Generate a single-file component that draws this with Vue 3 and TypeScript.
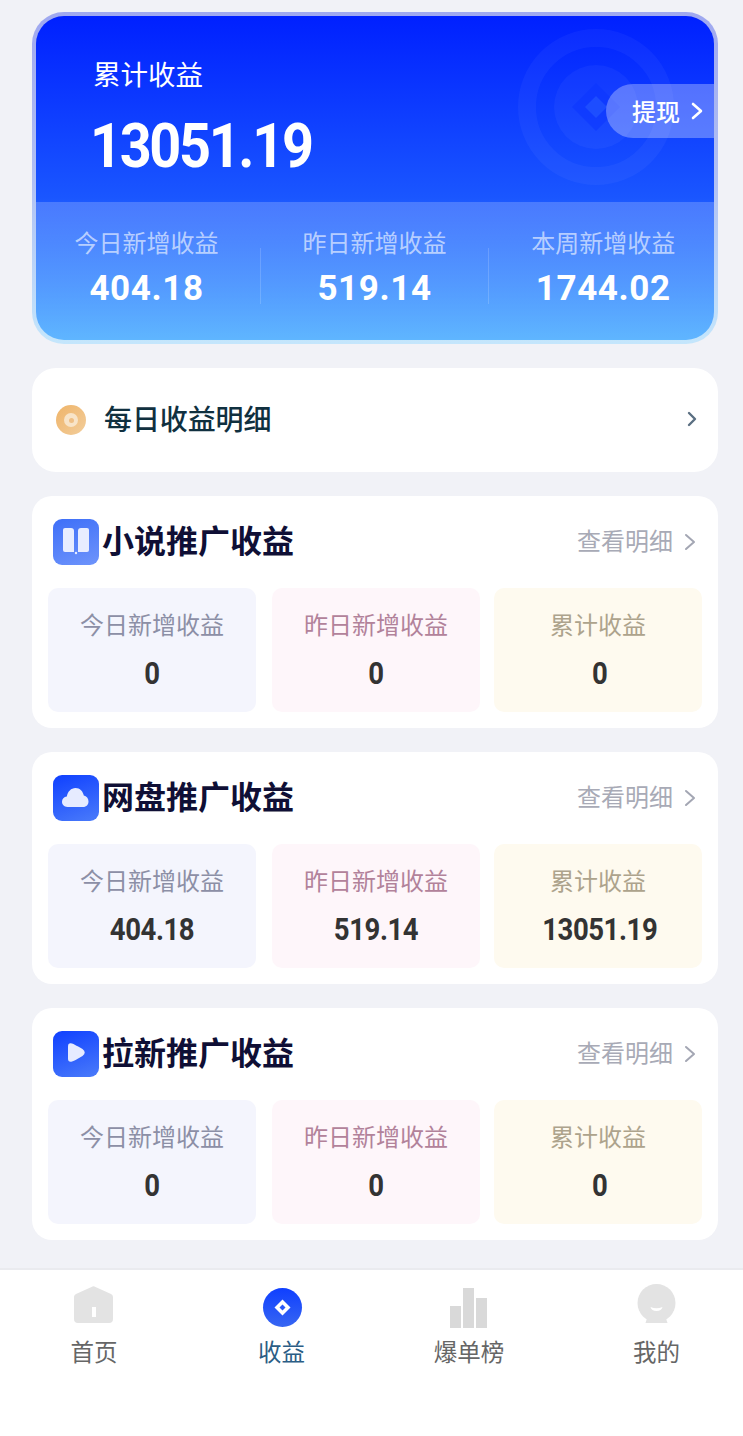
<script setup lang="ts">
interface Section {
  title: string;
  icon: 'book' | 'cloud' | 'play';
  today: string;
  yesterday: string;
  total: string;
}

const heroStats = [
  { label: '今日新增收益', value: '404.18' },
  { label: '昨日新增收益', value: '519.14' },
  { label: '本周新增收益', value: '1744.02' },
];

const sections: Section[] = [
  { title: '小说推广收益', icon: 'book', today: '0', yesterday: '0', total: '0' },
  { title: '网盘推广收益', icon: 'cloud', today: '404.18', yesterday: '519.14', total: '13051.19' },
  { title: '拉新推广收益', icon: 'play', today: '0', yesterday: '0', total: '0' },
];

const tabs = [
  { key: 'home', label: '首页' },
  { key: 'income', label: '收益' },
  { key: 'rank', label: '爆单榜' },
  { key: 'mine', label: '我的' },
];
</script>

<template>
  <div class="page">
    <section class="hero">
      <div class="hero-top">
        <svg class="coin" viewBox="0 0 160 160" aria-hidden="true">
          <circle cx="80" cy="80" r="69" fill="none" stroke="#fff" stroke-opacity="0.04" stroke-width="18" />
          <circle cx="80" cy="80" r="42" fill="#fff" fill-opacity="0.04" />
          <path d="M80 56 L104 80 L80 104 L56 80 Z" fill="#0a34ff" fill-opacity="0.5" />
          <path d="M80 69 L91 80 L80 91 L69 80 Z" fill="#2456ff" fill-opacity="0.7" />
        </svg>
        <div class="hero-label">累计收益</div>
        <div class="hero-value">13051.19</div>
        <div class="withdraw">
          <span>提现</span>
          <svg width="12" height="18" viewBox="0 0 12 18" aria-hidden="true">
            <path d="M2 2 L10 9 L2 16" fill="none" stroke="#fff" stroke-width="2.6" stroke-linecap="round" stroke-linejoin="round" />
          </svg>
        </div>
      </div>
      <div class="hero-bottom">
        <div v-for="s in heroStats" :key="s.label" class="hero-stat">
          <div class="hero-stat-label">{{ s.label }}</div>
          <div class="hero-stat-value">{{ s.value }}</div>
        </div>
      </div>
    </section>

    <section class="daily">
      <div class="disc"><i></i></div>
      <div class="daily-title">每日收益明细</div>
      <svg class="daily-arrow" width="10" height="16" viewBox="0 0 10 16" aria-hidden="true">
        <path d="M2 2 L8 8 L2 14" fill="none" stroke="#5b6f82" stroke-width="2.4" stroke-linecap="round" stroke-linejoin="round" />
      </svg>
    </section>

    <section v-for="sec in sections" :key="sec.title" class="card">
      <header class="card-head">
        <div class="app-icon" :class="sec.icon">
          <svg v-if="sec.icon === 'book'" width="46" height="46" viewBox="0 0 46 46" aria-hidden="true">
            <path d="M10 11 Q10 9 12 9 H18 Q21 9 21 12 V33 H12 Q10 33 10 31 Z" fill="#e8edff" />
            <path d="M36 11 Q36 9 34 9 H28 Q25 9 25 12 V33 H34 Q36 33 36 31 Z" fill="#e8edff" />
            <circle cx="23" cy="34" r="1.2" fill="#e8edff" />
          </svg>
          <svg v-else-if="sec.icon === 'cloud'" width="46" height="46" viewBox="0 0 46 46" aria-hidden="true">
            <path d="M14.500 32 C11 32 9 29.500 9 26.800 C9 24 11 21.800 13.800 21.500 C14.800 16.500 18 13 22.500 13 C27 13 30 16.500 30.800 20.500 C33.500 21 35.500 23.500 35.500 26.500 C35.500 29.500 33.500 32 30 32 Z" fill="#e6ebff" />
          </svg>
          <svg v-else width="46" height="46" viewBox="0 0 46 46" aria-hidden="true">
            <path d="M15 15.500 Q15 11.500 19 12.500 Q21 13 29.500 18 Q34 21.500 29.500 25 Q21 30 19 30.500 Q15 31.500 15 27.500 Z" fill="#e6ebff" />
          </svg>
        </div>
        <h2 class="card-title">{{ sec.title }}</h2>
        <div class="card-more">
          <span>查看明细</span>
          <svg width="12" height="18" viewBox="0 0 12 18" aria-hidden="true">
            <path d="M2 2 L10 9 L2 16" fill="none" stroke="#a3a6b3" stroke-width="2" stroke-linecap="round" stroke-linejoin="round" />
          </svg>
        </div>
      </header>
      <div class="tiles">
        <div class="tile tile-blue">
          <div class="tile-label">今日新增收益</div>
          <div class="tile-value">{{ sec.today }}</div>
        </div>
        <div class="tile tile-pink">
          <div class="tile-label">昨日新增收益</div>
          <div class="tile-value">{{ sec.yesterday }}</div>
        </div>
        <div class="tile tile-cream">
          <div class="tile-label">累计收益</div>
          <div class="tile-value">{{ sec.total }}</div>
        </div>
      </div>
    </section>

    <nav class="tabbar">
      <div v-for="t in tabs" :key="t.key" class="tab" :class="{ active: t.key === 'income' }">
        <svg width="44" height="44" viewBox="0 0 44 44" aria-hidden="true">
          <template v-if="t.key === 'home'">
            <path d="M2 13 Q2 11 4 10 L19.500 3 Q21.500 1.500 23.500 3 L39 10 Q41 11 41 13 V35 Q41 39 37 39 H6 Q2 39 2 35 Z" fill="#e3e3e3" />
            <rect x="20" y="23" width="4" height="10" fill="#fff" />
          </template>
          <template v-else-if="t.key === 'income'">
            <defs>
              <linearGradient id="incomeFill" x1="0" y1="0" x2="0" y2="1">
                <stop offset="0" stop-color="#0f3fff" />
                <stop offset="1" stop-color="#3766f2" />
              </linearGradient>
            </defs>
            <circle cx="22.500" cy="23.500" r="19.500" fill="url(#incomeFill)" />
            <path d="M22.500 15.500 L30.500 23.500 L22.500 31.500 L14.500 23.500 Z" fill="#fff" />
            <path d="M22.500 20.500 L25.500 23.500 L22.500 26.500 L19.500 23.500 Z" fill="#2a58f8" />
          </template>
          <template v-else-if="t.key === 'rank'">
            <rect x="3" y="22" width="11" height="22" fill="#d9d9d9" />
            <rect x="16" y="4" width="11" height="40" fill="#d9d9d9" />
            <rect x="29" y="14" width="11" height="30" fill="#d9d9d9" />
          </template>
          <template v-else>
            <circle cx="21.500" cy="19" r="19" fill="#e3e3e3" />
            <path d="M10.500 39 Q11 35 14 32 H29 Q32 35 32.500 39 Z" fill="#e3e3e3" />
            <path d="M15.500 23 Q21.500 25.500 27.500 23 Q26.500 27 21.500 27 Q16.500 27 15.500 23 Z" fill="#fff" />
          </template>
        </svg>
        <span class="tab-label">{{ t.label }}</span>
      </div>
    </nav>
  </div>
</template>

<style>
body {
  background: #f1f2f7;
}
</style>

<style scoped>
.page {
  width: 743px;
  height: 1436px;
  box-sizing: border-box;
  padding: 12px 25px 0 32px;
  background: #f1f2f7;
  font-family: "Noto Sans CJK SC", "Noto Sans", sans-serif;
  display: flex;
  flex-direction: column;
  overflow: hidden;
}

.hero {
  width: 686px;
  height: 332px;
  box-sizing: border-box;
  flex: none;
  border: 4px solid transparent;
  border-radius: 32px;
  background:
    linear-gradient(180deg, #0020ff 0%, #1a56ff 56%, #5fb6ff 100%) padding-box,
    linear-gradient(180deg, #9fa8f0 0%, #b0c0f4 50%, #c4e6fc 100%) border-box;
  overflow: hidden;
  display: flex;
  flex-direction: column;
  color: #fff;
}

.hero-top {
  height: 186px;
  flex: none;
  position: relative;
  padding: 37px 0 0 57px;
  box-sizing: border-box;
}

.coin {
  position: absolute;
  left: 480px;
  top: 11px;
  width: 160px;
  height: 160px;
}

.hero-label {
  font-size: 27.500px;
  line-height: 40px;
  font-weight: 400;
}

.hero-value {
  font-family: Roboto, "Liberation Sans", sans-serif;
  font-size: 62px;
  line-height: 72px;
  font-weight: 700;
  letter-spacing: -2.6px;
  margin-top: 17px;
  margin-left: -3px;
  transform: scaleX(0.9);
  transform-origin: left center;
}

.withdraw {
  position: absolute;
  right: 0;
  top: 68px;
  width: 108px;
  height: 54px;
  box-sizing: border-box;
  padding-left: 26px;
  border-radius: 27px 0 0 27px;
  background: rgba(255, 255, 255, 0.3);
  display: flex;
  align-items: center;
  gap: 11px;
  font-size: 24px;
  font-weight: 500;
}

.withdraw span {
  margin-bottom: 2px;
}

.hero-bottom {
  flex: 1;
  margin-left: -3.5px;
  background: linear-gradient(180deg, rgba(255, 255, 255, 0.2), rgba(255, 255, 255, 0));
  display: grid;
  grid-template-columns: 228px 228px 229.500px;
}

.hero-stat {
  padding-top: 22px;
  text-align: center;
  position: relative;
}

.hero-stat + .hero-stat::before {
  content: "";
  position: absolute;
  left: -1px;
  top: 46px;
  bottom: 36px;
  width: 1px;
  background: rgba(255, 255, 255, 0.16);
}

.hero-stat-label {
  font-size: 24px;
  line-height: 36px;
  color: rgba(255, 255, 255, 0.62);
}

.hero-stat-value {
  font-family: Roboto, "Liberation Sans", sans-serif;
  font-size: 35px;
  line-height: 42px;
  font-weight: 700;
  letter-spacing: 0.6px;
  margin-top: 8px;
}

.daily {
  width: 686px;
  height: 104px;
  flex: none;
  box-sizing: border-box;
  margin-top: 24px;
  padding: 0 21px 0 24px;
  border-radius: 24px;
  background: #fff;
  display: flex;
  align-items: center;
}

.disc {
  width: 30px;
  height: 30px;
  border-radius: 50%;
  background: linear-gradient(135deg, #efb469, #f2cd9b);
  display: flex;
  align-items: center;
  justify-content: center;
  position: relative;
}

.disc::before {
  content: "";
  width: 14px;
  height: 14px;
  border-radius: 50%;
  background: #f8e4c8;
}

.disc i {
  position: absolute;
  width: 5px;
  height: 5px;
  border-radius: 50%;
  background: #efbf85;
}

.daily-title {
  margin: 0 0 4px 18px;
  font-size: 28px;
  font-weight: 500;
  line-height: 40px;
  color: #10303f;
  letter-spacing: -0.1px;
}

.daily-arrow {
  margin: 0 0 2px auto;
}

.card {
  width: 686px;
  height: 232px;
  flex: none;
  box-sizing: border-box;
  margin-top: 24px;
  padding: 0 16px;
  border-radius: 20px;
  background: #fff;
}

.card-head {
  height: 92px;
  display: flex;
  align-items: center;
  padding-left: 5px;
}

.app-icon {
  width: 46px;
  height: 46px;
  border-radius: 9px;
  flex: none;
}

.app-icon svg {
  display: block;
}

.app-icon.book {
  background: linear-gradient(160deg, #3e6ff8, #6e94fb);
}

.app-icon.cloud,
.app-icon.play {
  background: linear-gradient(160deg, #0f40ff, #4a7bfa);
}

.card-title {
  margin: 0 0 6px 3px;
  font-size: 32px;
  line-height: 44px;
  font-weight: 700;
  color: #0f0f35;
}

.card-more {
  margin-left: auto;
  margin-right: 6px;
  display: flex;
  align-items: center;
  gap: 11px;
  font-size: 24px;
  color: #a8aab6;
}

.card-more span {
  margin-bottom: 5px;
}

.tiles {
  display: flex;
}

.tile {
  width: 208px;
  height: 124px;
  flex: none;
  border-radius: 10px;
  text-align: center;
  box-sizing: border-box;
  padding-top: 18px;
}

.tile-pink {
  margin-left: 16px;
  background: #fef6fa;
}

.tile-cream {
  margin-left: 14px;
  background: #fefaef;
}

.tile-cream .tile-value {
  padding-left: 4px;
}

.tile-blue {
  background: #f4f5fd;
}

.tile-blue .tile-label {
  color: #8c8fa6;
}

.tile-pink .tile-label {
  color: #b2829a;
}

.tile-cream .tile-label {
  color: #ada38c;
}

.tile-label {
  font-size: 24px;
  line-height: 36px;
}

.tile-value {
  font-family: Roboto, "Liberation Sans", sans-serif;
  font-size: 32px;
  line-height: 40px;
  font-weight: 700;
  color: #333;
  margin-top: 11px;
  letter-spacing: -0.5px;
  transform: scaleX(0.86);
}

.tabbar {
  width: 750px;
  height: 168px;
  flex: none;
  box-sizing: border-box;
  margin: 28px 0 0 -31.750px;
  background: #fff;
  border-top: 2px solid #eaebef;
  display: grid;
  grid-template-columns: repeat(4, 187.500px);
}

.tab {
  display: flex;
  flex-direction: column;
  align-items: center;
  padding-top: 14px;
  box-sizing: border-box;
}

.tab svg {
  flex: none;
  display: block;
}

.tab-label {
  margin-top: 5px;
  font-size: 23.500px;
  line-height: 36px;
  color: #666;
}

.tab.active .tab-label {
  color: #2b5d85;
}
</style>
